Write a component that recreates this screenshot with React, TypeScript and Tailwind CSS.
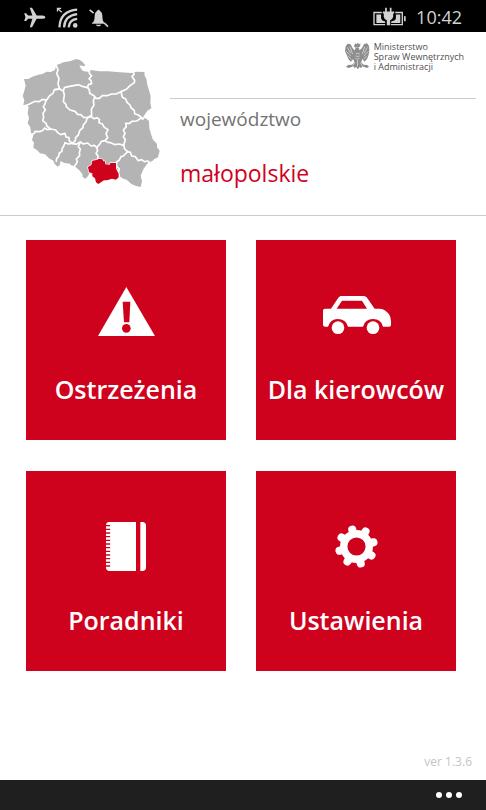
import type { ReactNode } from "react";

function PlaneIcon() {
  return (
    <svg viewBox="74 18 66 64" className="h-[21px] w-[22px]" fill="#d2d2d2" aria-hidden="true">
      <path d="M139 49q-2-5-9-5h-18L98 20h-7l8 24H86l-6-7h-6l4 12-4 12h6l6-7h13l-8 26h7l14-26h18q7 0 9-5z" />
    </svg>
  );
}

function WifiIcon() {
  return (
    <svg viewBox="166 18 66 64" className="h-[21px] w-[22px]" fill="none" stroke="#d2d2d2" aria-hidden="true">
      <path d="M176 80q2-50 54-54M190 80q2-36 40-40M204 80q2-24 26-26" strokeWidth="7" />
      <circle cx="224" cy="74" r="7" fill="#d2d2d2" stroke="none" />
      <path d="M170 32V22h11M171 23l12 11" strokeWidth="4" />
    </svg>
  );
}

function BellIcon() {
  return (
    <svg viewBox="266 20 64 62" className="h-[21px] w-[21px]" fill="#d2d2d2" aria-hidden="true">
      <path d="M278 68q8-4 8-18 0-16 8-19 0-4 4-4t4 4q8 3 8 19 0 14 8 18v2h-40zM290 73h16q-2 5-8 5t-8-5z" />
      <path d="M271 28l12 10M316 68l11 11" stroke="#d2d2d2" strokeWidth="5" />
    </svg>
  );
}

function BatteryIcon() {
  return (
    <svg viewBox="66 20 98 56" className="h-[19px] w-[33px]" aria-hidden="true">
      <path d="M92 36H69v36h33M132 36h21v36h-34" fill="none" stroke="#d2d2d2" strokeWidth="4" />
      <path d="M158 47h5v15h-5z" fill="#d2d2d2" />
      <path d="M76 42h14v12q2 7 12 9v4H76zM134 42h13v25h-27v-4q12-2 14-9z" fill="#d2d2d2" />
      <path d="M102 22h5v11h9V22h5v11h8v6h-3v10q-2 8-9 10v15h-10V59q-8-2-9-10V39h-3v-6h7z" fill="#d2d2d2" />
    </svg>
  );
}

function PolandMap() {
  return (
    <svg viewBox="15 15 429 405" className="h-[135px] w-[143px] shrink-0" role="img" aria-label="Mapa Polski">
      <path
        fill="#b4b4b4"
        d="M27 87L40 87 52 80 70 74 82 72 95 65 107 66 120 60 124 45 134 42 145 37 165 34 183 27 193 29 202 35 211 46 208 49 193 46 198 56 204 63 222 66 227 60 253 64 279 64 315 67 349 69 366 65 388 66 389 77 394 86 397 104 407 138 406 158 409 175 397 182 384 202 395 207 402 213 403 235 409 255 413 268 426 282 426 292 434 302 429 322 418 327 412 333 399 338 385 358 377 377 381 394 377 411 361 407 349 402 335 389 325 386 309 376 250 396 224 368 219 379 211 386 203 381 202 372 193 361 178 348 168 346 165 341 148 339 137 333 134 345 128 350 119 342 115 332 102 325 90 313 75 310 66 300 55 293 57 278 51 270 55 256 48 248 46 232 38 220 42 205 38 190 41 172 38 166 25 166 28 150 23 138 27 126 32 107z"
      />
      <g fill="none" stroke="#fff" strokeWidth="5" strokeLinejoin="round" strokeLinecap="round">
        <path d="M122 42L129 60 125 70 132 86 129 102 134 117 118 119 114 130 105 136 95 150 82 148 73 155 60 154 42 163 24 169" />
        <path d="M122 119L134 117 145 123 148 135 145 155 153 163 154 170 165 180 180 184 188 193 197 194 206 202 218 203" />
        <path d="M145 122L148 113 160 110 180 106 190 104 205 110 218 113 220 104 230 101 228 92 222 86 230 78 223 70 223 60" />
        <path d="M218 113L223 119 224 130 237 137 243 145 253 145 262 137 276 137 290 132 303 132 318 125 335 117 345 107 358 98 359 91 351 80 357 73 354 63" />
        <path d="M238 143L235 153 237 165 229 178 230 195 218 203" />
        <path d="M318 125L322 142 332 147 336 157 345 165 348 173 358 182 359 191 370 195 384 207" />
        <path d="M93 150L90 162 85 170 91 180 84 190 86 202 83 212 94 221 95 228 107 237 122 240 128 248 137 254 150 250 153 261 162 263 163 273 172 280" />
        <path d="M47 256L58 250 60 244 75 245 85 240 88 234 98 239 107 237" />
        <path d="M217 203L213 215 205 225 204 233 194 242 190 255 182 262 181 272 172 280" />
        <path d="M218 203L229 200 237 206 246 203 253 208 252 218 262 222 268 232 279 239 273 251 278 263 270 272 259 274 254 283 245 292 238 286 228 288 218 279 205 282 196 276 184 283 172 280" />
        <path d="M386 205L377 205 365 213 350 214 345 220 332 220 334 230 325 240 330 250 325 260 331 269 326 285 329 297 338 305 346 307 350 318 361 320 370 332 380 329 388 335 399 333 404 339" />
        <path d="M270 272L278 277 287 278 300 284 312 282 326 286M338 305L325 318 318 320 313 330 303 337" />
        <path d="M245 292L248 302 243 310 249 318 248 328M305 338L304 348 313 357 310 367 313 377" />
        <path d="M172 280L160 282 150 278 146 289 141 296 141 304 133 309 131 319 125 325 124 334M196 276L190 290 196 298 193 308 194 317 184 327 187 336 178 350" />
      </g>
      <path
        fill="#cf021e"
        stroke="#fff"
        strokeWidth="4"
        paintOrder="stroke"
        d="M219 351L229 345 232 332 244 330 253 326 262 328 265 334 270 334 271 343 284 344 286 339 303 339 303 356 311 371 311 382 303 389 291 386 276 391 267 391 250 402 243 397 240 385 232 379 232 370 222 367z"
      />
    </svg>
  );
}

function EagleLogo() {
  return (
    <svg viewBox="0 0 76 82" className="h-[27px] w-[25px] shrink-0" aria-hidden="true">
      <path
        fill="#8d8d8d"
        d="M31 4l4 3 4-5 4 5 4-3-1 9-4 3 2 9 7-6 7-13 9-2 6 8 1 12-2 15-5 13-8 8-6-8-4 10 8 7 11 1 5 6-7 3-13-5-4 5-5-3-5 7-5-7-5 3-4-5-13 5-9-3 6-6 12-1 8-7-4-10-7 8-8-8-5-13L0 27l2-14 6-8 9 2 7 13 6 6 2-9-5-3z"
      />
      <g fill="none" stroke="#e9e9e9" strokeWidth="2">
        <path d="M7 16l10 18M4 28l14 15M9 42l10 11M15 14l8 23M68 16L58 34M71 28L57 43M66 42L56 53M60 14l-8 23" />
        <path d="M33 34q6 4 12 0M31 42q7 5 14 0M32 50q6 4 12 0M38 55v20M30 63l-7 9M46 63l7 9M34 17h7" />
      </g>
    </svg>
  );
}

function WarningIcon() {
  return (
    <svg viewBox="0 0 171 171" className="size-[57px]" aria-hidden="true">
      <path d="M85 0l86 147H0z" fill="#fff" />
      <path d="M74 44h23l-3 62H78z" fill="#cf021e" />
      <circle cx="85" cy="124" r="13" fill="#cf021e" />
    </svg>
  );
}

function CarIcon() {
  return (
    <svg viewBox="218 184 204 114" className="h-[38px] w-[68px] overflow-visible" aria-hidden="true">
      <path
        fill="#fff"
        fillRule="evenodd"
        d="M273 184h72l7 4 24 34h16q17 2 27 17 6 9 6 20v13q-1 4-5 4h-19q-5-23-30-23-24 0-30 23h-45q-6-23-31-23-22 0-29 23h-9q-5 0-6-5v-44q1-5 6-5h18l22-33zM278 198l-16 24h91l-15-24z"
      />
      <circle cx="266" cy="279" r="19" fill="#fff" />
      <circle cx="371" cy="279" r="19" fill="#fff" />
    </svg>
  );
}

function NotebookIcon() {
  return (
    <svg viewBox="258 168 120 147" className="h-[49px] w-[40px]" aria-hidden="true">
      <path d="M266 168h82v147h-82q-7-1-8-8V176q1-7 8-8zM361 168h7q9 1 10 9v129q-1 8-10 9h-7z" fill="#fff" />
      <path d="M264 177v129" stroke="#cf021e" strokeWidth="13" strokeDasharray="4 7" />
    </svg>
  );
}

const gearTeeth = [-14, 31, 76, 121, 166, 211, 256, 301];

function GearIcon() {
  return (
    <svg viewBox="-64 -64 128 128" className="h-[43px] w-[43px]" aria-hidden="true">
      <circle r="38" fill="none" stroke="#fff" strokeWidth="22" />
      {gearTeeth.map((angle) => (
        <path key={angle} d="M0-42V-52" stroke="#fff" strokeWidth="24" strokeLinecap="round" transform={`rotate(${angle})`} />
      ))}
    </svg>
  );
}

function Tile({ label, icon }: { label: string; icon: ReactNode }) {
  return (
    <button type="button" className="flex aspect-square flex-col items-center bg-[#cf021e] pt-[43px] text-white">
      <span className="flex h-16 items-center justify-center">{icon}</span>
      <span className="mt-6 whitespace-nowrap text-[25px] leading-9 font-semibold">{label}</span>
    </button>
  );
}

export default function App() {
  return (
    <div className="flex min-h-screen flex-col bg-white font-['Open_Sans','Noto_Sans',sans-serif]">
      <div className="flex h-8 items-center justify-between bg-black px-6">
        <div className="flex items-center gap-2.5 pt-0.5">
          <PlaneIcon />
          <WifiIcon />
          <BellIcon />
        </div>
        <div className="flex items-center gap-2.5">
          <BatteryIcon />
          <time className="pt-0.5 text-lg leading-8 text-[#d2d2d2]">10:42</time>
        </div>
      </div>

      <header className="flex h-[184px] border-b border-[#cccccc] pl-5">
        <div className="pt-[23px]">
          <PolandMap />
        </div>
        <div className="ml-[7px] flex flex-1 flex-col">
          <div className="mr-[10px] flex h-[67px] justify-end border-b border-[#cccccc] pt-2.5 pr-3">
            <div className="flex gap-1">
              <EagleLogo />
              <p className="text-[9px] leading-[10px] text-[#505050]">
                Ministerstwo
                <br />
                Spraw Wewnętrznych
                <br />i Administracji
              </p>
            </div>
          </div>
          <p className="mt-1 pl-2.5 text-[19px] leading-8 text-[#737373]">województwo</p>
          <h1 className="mt-[22px] pl-2.5 text-[23px] leading-8 text-[#cf021e]">małopolskie</h1>
        </div>
      </header>

      <main className="flex flex-1 flex-col">
        <nav className="grid grid-cols-2 gap-x-[30px] gap-y-[31px] pt-6 pr-[30px] pl-[26px]">
          <Tile label="Ostrzeżenia" icon={<WarningIcon />} />
          <Tile label="Dla kierowców" icon={<CarIcon />} />
          <Tile label="Poradniki" icon={<NotebookIcon />} />
          <Tile label="Ustawienia" icon={<GearIcon />} />
        </nav>
        <p className="mt-auto pr-3.5 pb-2 text-right text-xs leading-5 text-[#c4c4c4]">ver 1.3.6</p>
      </main>

      <footer className="flex h-[30px] items-center justify-end bg-[#1f1f1f] pr-6">
        <button type="button" aria-label="Więcej" className="flex gap-1">
          <span className="size-1.5 rounded-full bg-white" />
          <span className="size-1.5 rounded-full bg-white" />
          <span className="size-1.5 rounded-full bg-white" />
        </button>
      </footer>
    </div>
  );
}
